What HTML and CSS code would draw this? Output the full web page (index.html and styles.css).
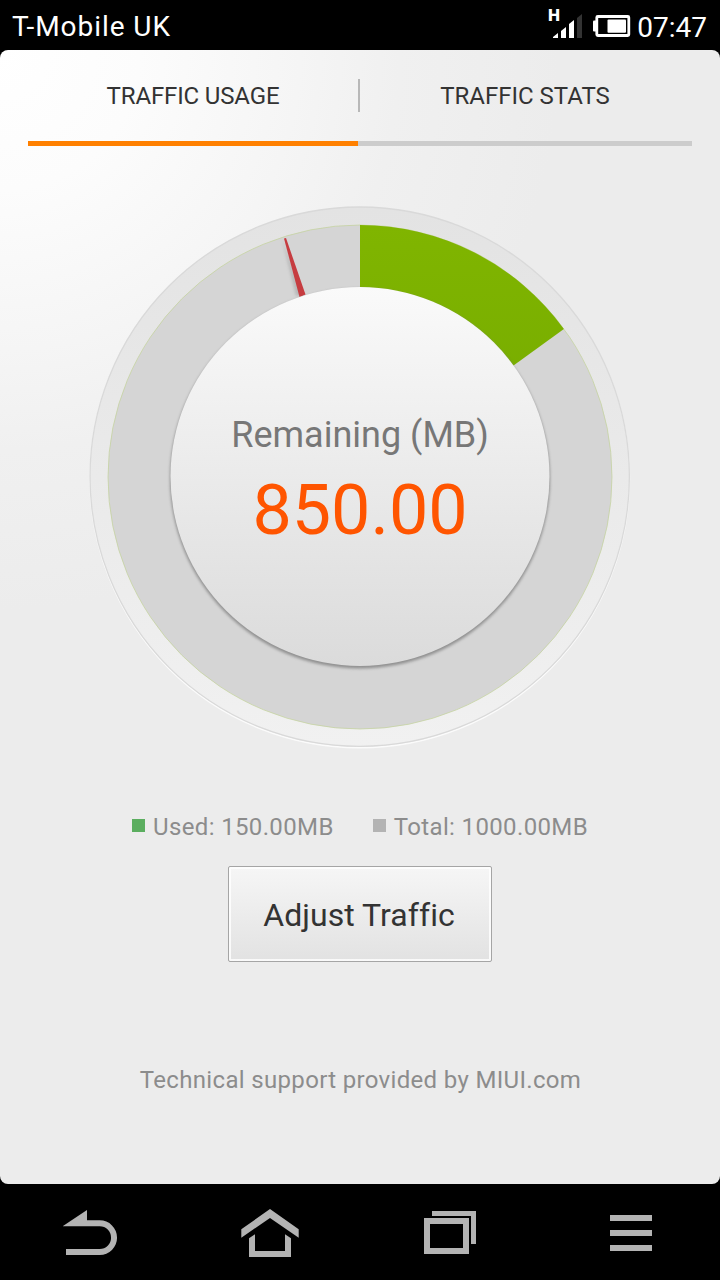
FILE: index.html
```html
<!DOCTYPE html>
<html lang="en">
<head>
    <meta charset="UTF-8">
    <meta name="viewport" content="width=device-width, initial-scale=1.0">
    <title>Traffic Usage</title>
    <link rel="stylesheet" href="styles.css">
</head>
<body>
    <header class="status-bar">
        <span class="carrier">T-Mobile UK</span>
        <div class="status-icons">
            <svg class="signal" width="40" height="50" viewBox="0 0 40 50">
                <text class="network" x="1" y="21" textLength="12" lengthAdjust="spacingAndGlyphs">H</text>
                <path fill="#fff" d="M6 38v-1l5-4v5zM14 38V31l5-4v11zM22 38V24l5-4v18z"/>
                <path fill="#333" d="M30 38V18l5-4v24z"/>
            </svg>
            <svg class="battery" width="38" height="50" viewBox="0 0 38 50">
                <path fill="#fff" d="M0 21.5q0-1 1-1h2v11H1q-1 0-1-1z"/>
                <rect x="3.8" y="16.5" width="32" height="19" rx="1" fill="none" stroke="#fff" stroke-width="2.8"/>
                <rect x="14.5" y="19.5" width="18.5" height="13.2" rx="1" fill="#fff"/>
            </svg>
            <span class="clock">07:47</span>
        </div>
    </header>

    <main class="panel">
        <nav class="tabs">
            <div class="tab active">TRAFFIC USAGE</div>
            <div class="tab">TRAFFIC STATS</div>
        </nav>

        <section class="gauge">
            <svg class="dial" width="544" height="544" viewBox="88 205 544 544">
                <defs>
                    <linearGradient id="rim" x1="0" y1="0" x2="0" y2="1">
                        <stop offset="0" stop-color="#e3e3e3"/>
                        <stop offset="1" stop-color="#f1f1f1"/>
                    </linearGradient>
                    <linearGradient id="disc" x1="0" y1="0" x2="0" y2="1">
                        <stop offset="0" stop-color="#fafafa"/>
                        <stop offset="1" stop-color="#dbdbdb"/>
                    </linearGradient>
                    <linearGradient id="used" x1="0" y1="0" x2="0" y2="1">
                        <stop offset="0" stop-color="#80b500"/>
                        <stop offset="1" stop-color="#74aa00"/>
                    </linearGradient>
                    <filter id="blur" x="-20%" y="-20%" width="140%" height="140%">
                        <feGaussianBlur stdDeviation="1.8"/>
                    </filter>
                </defs>
                <!-- rim -->
                <circle cx="359.7" cy="478" r="269.7" fill="none" stroke="#fbfbfb" stroke-width="1.5"/>
                <circle cx="359.7" cy="476.7" r="269.7" fill="url(#rim)" stroke="#d9d9d9" stroke-width="1.3"/>
                <!-- track and used slice -->
                <circle cx="360" cy="477" r="252" fill="#d5d5d5" stroke="#c3d29a" stroke-width="0.7"/>
                <path d="M360 477V225A252 252 0 0 1 563.9 328.9Z" fill="url(#used)"/>
                <!-- day marker -->
                <path d="M282 238L296 296L302 295Z" fill="#999" opacity=".5" filter="url(#blur)"/>
                <path d="M284 238.5L286 238L305.5 294.5L299.5 297Z" fill="#c63c40"/>
                <!-- disc -->
                <circle cx="360" cy="478.5" r="190" fill="#777" opacity=".75" filter="url(#blur)"/>
                <circle cx="360" cy="476.5" r="189.5" fill="url(#disc)"/>
            </svg>
            <div class="reading">
                <div class="reading-label">Remaining (MB)</div>
                <div class="reading-value">850.00</div>
            </div>
        </section>

        <div class="legend">
            <span class="legend-item used">Used: 150.00MB</span>
            <span class="legend-item total">Total: 1000.00MB</span>
        </div>

        <button class="adjust">Adjust Traffic</button>

        <p class="support">Technical support provided by MIUI.com</p>
    </main>

    <footer class="nav-bar">
        <svg viewBox="0 0 180 96">
            <path fill="#b3b3b3" d="M63 42L87 26V36.3H99.7a17.35 17.35 0 0 1 0 34.7H66V65H99.7a11.35 11.35 0 0 0 0-22.7H63z"/>
        </svg>
        <svg viewBox="0 0 180 96">
            <path fill="#b3b3b3" d="M90 25L118.7 45.3V53.7L90 34L61.3 53.7V45.3z"/>
            <path fill="#b3b3b3" d="M69 54.3L75 50.3V67H105V50.3L111 54.3V73H69z"/>
        </svg>
        <svg viewBox="0 0 180 96">
            <path fill="#b3b3b3" d="M72 27H116V60H111V32H72z"/>
            <rect x="67" y="37" width="39" height="30" fill="none" stroke="#b3b3b3" stroke-width="6"/>
        </svg>
        <svg viewBox="0 0 180 96">
            <path fill="#b3b3b3" d="M70 31h42v6H70zM70 46h42v6H70zM70 61h42v6H70z"/>
        </svg>
    </footer>
</body>
</html>
```

FILE: styles.css
```css
* {
    box-sizing: border-box;
}

body {
    margin: 0;
    width: 720px;
    height: 1280px;
    background: #000;
    font-family: Roboto, sans-serif;
    display: flex;
    flex-direction: column;
    overflow: hidden;
}

svg {
    display: block;
}

.status-bar {
    height: 50px;
    padding: 0 13px 0 12px;
    display: flex;
    justify-content: space-between;
    color: #fff;
    font-size: 28px;
    line-height: 53px;
}

.carrier {
    letter-spacing: 0.95px;
}

.clock {
    line-height: 55px;
}

.status-icons {
    display: flex;
}

.battery {
    margin: 0 6px 0 6px;
}

.network {
    font-size: 16px;
    font-weight: 900;
    fill: #fff;
}

.panel {
    height: 1134px;
    border-radius: 8px;
    background: radial-gradient(circle at 0 0, #fff 0, #fcfcfc 140px, #f5f5f5 300px, #f0f0f0 400px, #ececec 560px);
    display: flex;
    flex-direction: column;
    align-items: center;
}

.tabs {
    width: 664px;
    height: 96px;
    display: flex;
}

.tab {
    flex: 1;
    border-bottom: 5px solid #ccc;
    text-align: center;
    font-size: 24px;
    line-height: 92px;
    color: #333;
    background: linear-gradient(#b8b8b8, #b8b8b8) no-repeat 0 29px / 2px 33px;
}

.tab.active {
    flex: 0 0 330px;
    border-bottom-color: #ff8000;
    background: none;
    letter-spacing: -0.15px;
}

.gauge {
    display: grid;
    margin-top: 59px;
}

.dial,
.reading {
    grid-area: 1 / 1;
}

.reading {
    padding-top: 206px;
    text-align: center;
}

.reading-label {
    font-size: 36px;
    line-height: 48px;
    color: #777;
}

.reading-value {
    margin-top: 11px;
    font-size: 70px;
    line-height: 80px;
    color: #ff5500;
}

.legend {
    margin-top: 62px;
    display: flex;
    gap: 39px;
    font-size: 24px;
    line-height: 32px;
    letter-spacing: 0.36px;
    color: #8c8c8c;
}

.legend-item {
    display: flex;
    align-items: center;
}

.legend-item::before {
    content: "";
    width: 13px;
    height: 13px;
    margin: 0 8px 3px 0;
    background: #b3b3b3;
}

.legend-item.used::before {
    background: #5bae5f;
}

.adjust {
    width: 264px;
    height: 96px;
    margin-top: 23px;
    padding: 1px 2px 0 0;
    border: 1px solid #a5a5a5;
    border-radius: 2px;
    background: linear-gradient(#f6f6f6, #e2e2e2);
    box-shadow: inset 0 0 0 2px rgba(255, 255, 255, 0.8);
    font-family: inherit;
    font-size: 32px;
    letter-spacing: 0.05px;
    color: #333;
}

.support {
    margin: 102px 0 0 1px;
    font-size: 24px;
    line-height: 32px;
    letter-spacing: 0.33px;
    color: #8c8c8c;
}

.nav-bar {
    height: 96px;
    display: grid;
    grid-template-columns: repeat(4, 180px);
}
```
